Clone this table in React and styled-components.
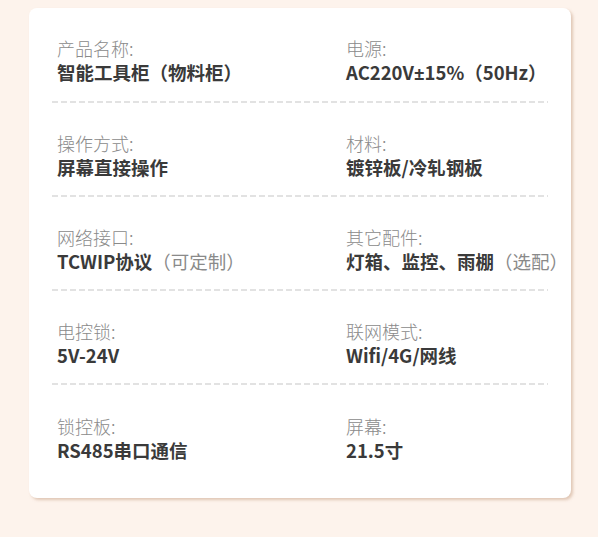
import styled, { createGlobalStyle } from 'styled-components';

const specs = [
  [
    { label: '产品名称:', value: '智能工具柜（物料柜）' },
    { label: '电源:', value: 'AC220V', sym: '±', rest: '15%（50Hz）' },
  ],
  [
    { label: '操作方式:', value: '屏幕直接操作' },
    { label: '材料:', value: '镀锌板/冷轧钢板' },
  ],
  [
    { label: '网络接口:', value: 'TCWIP协议', note: '（可定制）' },
    { label: '其它配件:', value: '灯箱、监控、雨棚', note: '（选配）' },
  ],
  [
    { label: '电控锁:', value: '5V-24V' },
    { label: '联网模式:', value: 'Wifi/4G/网线' },
  ],
  [
    { label: '锁控板:', value: 'RS485串口通信' },
    { label: '屏幕:', value: '21.5寸' },
  ],
];

const App = () => (
  <>
    <Global />
    <Page>
      <Card>
        {specs.map((row, i) => (
          <Row key={i} $last={i === specs.length - 1}>
            {row.map((item) => (
              <Item key={item.label}>
                <Label>{item.label}</Label>
                <Value>
                  {item.value}
                  {item.sym && <Sym>{item.sym}</Sym>}
                  {item.rest}
                  {item.note && <Note>{item.note}</Note>}
                </Value>
              </Item>
            ))}
          </Row>
        ))}
      </Card>
    </Page>
  </>
);

export default App;


const Global = createGlobalStyle`
  body {
    margin: 0;
    background: #fff;
    font-family: "Noto Sans CJK SC", "Noto Sans", sans-serif;
  }
`;

const Page = styled.div`
    width: 598px;
    height: 537px;
    box-sizing: border-box;
    padding: 8px 0 0 29px;
    background: #fdf3ec;
`;

const Card = styled.div`
    width: 542px;
    height: 490px;
    box-sizing: border-box;
    padding: 0 23px;
    background: #fff;
    border-radius: 8px;
    box-shadow: 2px 2px 3px rgba(205, 170, 145, 0.6);
`;

const Row = styled.div`
    position: relative;
    display: grid;
    grid-template-columns: 289px 1fr;
    padding: ${(p) => (p.$last ? '29px 0 0' : '28px 0 16px')};
    margin-bottom: ${(p) => (p.$last ? '0' : '2px')};
    &::after {
        content: ${(p) => (p.$last ? 'none' : "''")};
        position: absolute;
        left: 0;
        right: 0;
        bottom: -2px;
        height: 2px;
        background: repeating-linear-gradient(to right, #e2e2e2 0 6px, transparent 6px 9px);
    }
`;

const Item = styled.div`
    padding-left: 5px;
    display: flex;
    flex-direction: column;
`;

const Label = styled.div`
    font-size: 18px;
    line-height: 24px;
    font-weight: 300;
    color: #8a8a8a;
`;

const Value = styled.div`
    font-size: 18.5px;
    line-height: 24px;
    font-weight: 700;
    color: #3a3a3a;
    white-space: nowrap;
`;

const Sym = styled.span`
    font-family: "Noto Sans", sans-serif;
`;

const Note = styled.span`
    font-weight: 400;
    color: #8a8a8a;
`;
